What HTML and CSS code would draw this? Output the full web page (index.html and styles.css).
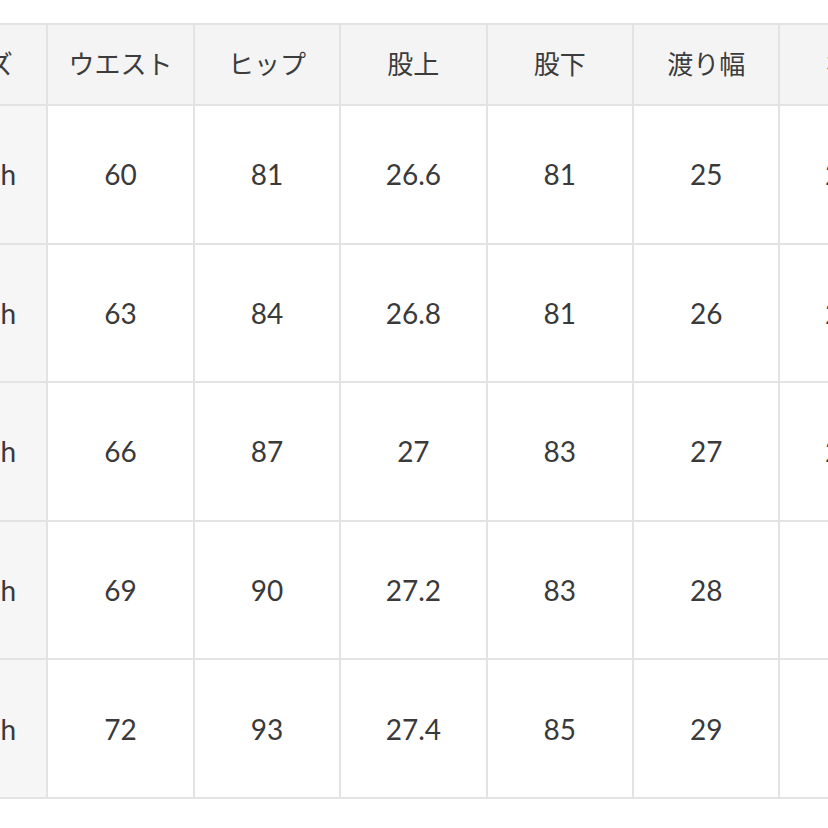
FILE: index.html
```
<!DOCTYPE html>
<html lang="ja">
<head>
<meta charset="utf-8">
<link rel="stylesheet" href="styles.css">
</head>
<body>
<div class="sheet">
  <div class="grid">
    <div class="cell head">サイズ</div>
    <div class="cell head">ウエスト</div>
    <div class="cell head">ヒップ</div>
    <div class="cell head">股上</div>
    <div class="cell head">股下</div>
    <div class="cell head">渡り幅</div>
    <div class="cell head">裾幅</div>

    <div class="cell side">24inch</div>
    <div class="cell">60</div><div class="cell">81</div><div class="cell">26.6</div><div class="cell">81</div><div class="cell">25</div><div class="cell">21.5</div>

    <div class="cell side">25inch</div>
    <div class="cell">63</div><div class="cell">84</div><div class="cell">26.8</div><div class="cell">81</div><div class="cell">26</div><div class="cell">22.5</div>

    <div class="cell side">26inch</div>
    <div class="cell">66</div><div class="cell">87</div><div class="cell">27</div><div class="cell">83</div><div class="cell">27</div><div class="cell">23.5</div>

    <div class="cell side">27inch</div>
    <div class="cell">69</div><div class="cell">90</div><div class="cell">27.2</div><div class="cell">83</div><div class="cell">28</div><div class="cell">24</div>

    <div class="cell side">28inch</div>
    <div class="cell">72</div><div class="cell">93</div><div class="cell">27.4</div><div class="cell">85</div><div class="cell">29</div><div class="cell">25</div>
  </div>
</div>
</body>
</html>
```
FILE: styles.css
```
html, body {
  margin: 0;
  padding: 0;
  background: #ffffff;
}
body {
  width: 828px;
  height: 828px;
  overflow: hidden;
  font-family: "Lato", "Noto Sans CJK JP", sans-serif;
  color: #3a3a3a;
}
.sheet {
  padding-top: 23px;
  margin-left: -100px;
}
.grid {
  display: grid;
  grid-template-columns: repeat(7, 144.4px);
  grid-template-rows: 79px repeat(5, 136.6px);
  gap: 2px;
  padding: 2px;
  background: #e3e3e3;
  width: max-content;
}
.cell {
  background: #ffffff;
  display: flex;
  align-items: center;
  justify-content: center;
  font-size: 28px;
  white-space: nowrap;
}
.head {
  background: #f4f4f4;
  font-family: "Noto Sans CJK JP", sans-serif;
  font-size: 26px;
  color: #3c3c3c;
  padding-bottom: 5px;
  box-sizing: border-box;
}
.side {
  background: #f6f6f6;
}
```
